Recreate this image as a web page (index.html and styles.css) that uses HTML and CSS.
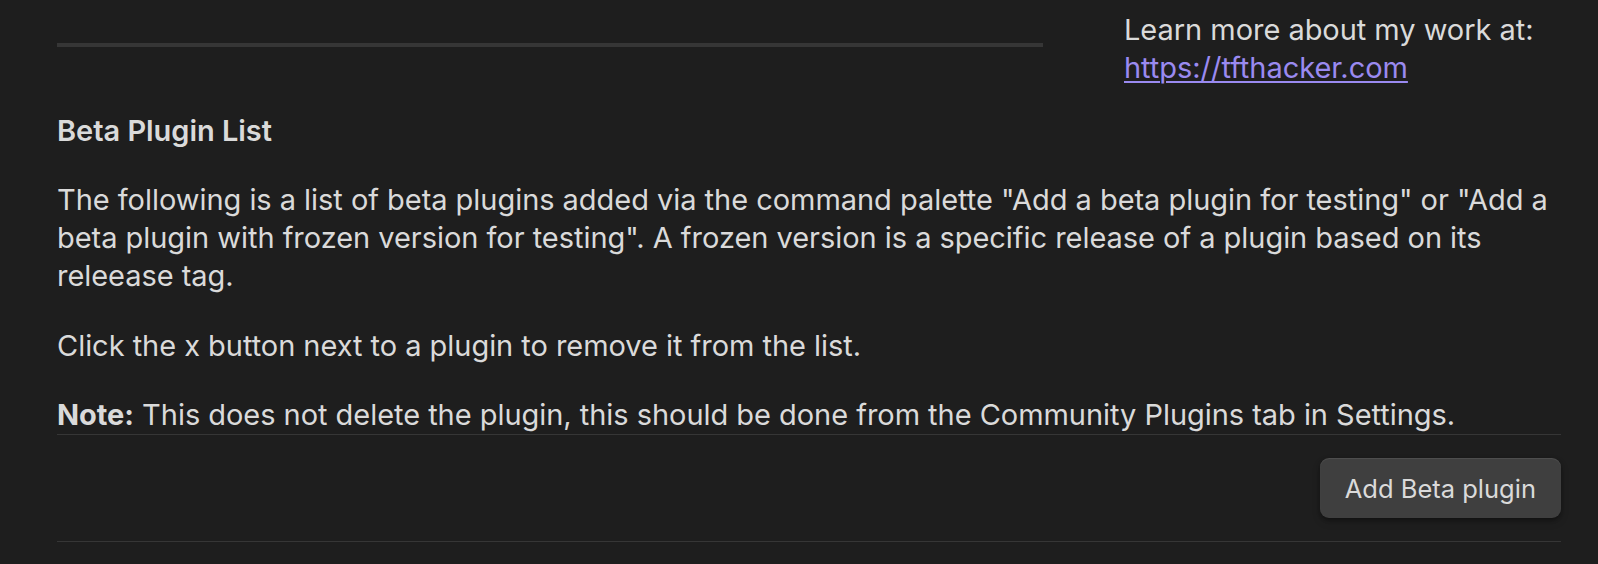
FILE: index.html
```html
<!DOCTYPE html>
<html lang="en">
<head>
<meta charset="utf-8">
<title>Beta Plugin List</title>
<link rel="stylesheet" href="styles.css">
</head>
<body>
<main class="settings">
  <section class="top">
    <hr class="rule">
    <div class="about">
      <div>Learn more about my work at:</div>
      <a class="link" href="#">https://tfthacker.com</a>
    </div>
  </section>
  <p class="heading">Beta Plugin List</p>
  <p class="text">The following is a list of beta plugins added via the command palette "Add a beta plugin for testing" or "Add a beta plugin with frozen version for testing". A frozen version is a specific release of a plugin based on its releease tag.</p>
  <p class="text">Click the x button next to a plugin to remove it from the list.</p>
  <p class="text note"><b>Note:</b> This does not delete the plugin, this should be done from the Community Plugins tab in Settings.</p>
  <div class="setting-item">
    <button class="btn" type="button">Add Beta plugin</button>
  </div>
  <div class="setting-item empty"></div>
</main>
</body>
</html>
```
FILE: styles.css
```css
html, body {
  margin: 0;
  padding: 0;
  background: #1e1e1e;
}
body {
  color: #dadada;
  font-family: Inter, "Noto Sans", "Liberation Sans", sans-serif;
  font-size: 29px;
  line-height: 38.3px;
  letter-spacing: -0.04px;
  overflow: hidden;
}
.settings {
  padding: 11px 37px 0 57px;
}
.top {
  display: flex;
  align-items: flex-start;
}
.rule {
  width: 986px;
  flex: none;
  margin: 32px 0 0 0;
  border: none;
  border-top: 4px solid #363636;
  height: 0;
}
.about {
  margin-left: 81px;
}
.link {
  color: #9a8af0;
  text-decoration: underline;
  text-decoration-thickness: 2px;
  text-underline-offset: 3px;
}
.heading {
  font-weight: 600;
  margin: 24px 0 31px;
}
.text {
  margin: 0 0 31px;
}
.text.note {
  margin-bottom: 0;
}
.text b {
  font-weight: 650;
}
.setting-item {
  border-top: 1px solid #363636;
  padding: 23px 0;
  display: flex;
  justify-content: flex-end;
}
.setting-item.empty {
  padding: 0;
  height: 30px;
}
.btn {
  font-family: inherit;
  font-size: 25.5px;
  letter-spacing: 0;
  color: #dadada;
  background: #3f3f3f;
  border: none;
  border-radius: 9px;
  height: 60px;
  padding: 0 25px;
  box-shadow: inset 0 1px 1px rgba(255,255,255,0.09), 0 4px 8px rgba(0,0,0,0.15), 0 2px 3px rgba(0,0,0,0.1), 0 2px 4px rgba(0,0,0,0.2);
}
```
